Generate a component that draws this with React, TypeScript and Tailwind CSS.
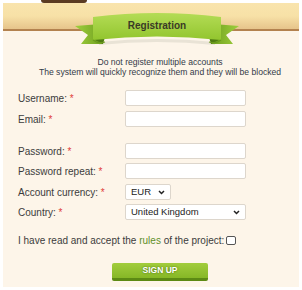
import React from 'react';

const font = { fontFamily: '"Liberation Sans", Arial, sans-serif' };

function Ribbon() {
  return (
    <svg width="172" height="38" viewBox="0 0 172 38" className="absolute left-[68px] top-[6px]">
      <defs>
        <linearGradient id="band" x1="0" y1="0" x2="0" y2="1">
          <stop offset="0" stopColor="#b4dc56" />
          <stop offset="1" stopColor="#92c52e" />
        </linearGradient>
        <linearGradient id="tail" x1="0" y1="0" x2="1" y2="0">
          <stop offset="0" stopColor="#9fcf3d" />
          <stop offset="1" stopColor="#6f9f1f" />
        </linearGradient>
        <linearGradient id="tailr" x1="1" y1="0" x2="0" y2="0">
          <stop offset="0" stopColor="#9fcf3d" />
          <stop offset="1" stopColor="#6f9f1f" />
        </linearGradient>
      </defs>
      {/* shadow under band */}
      <path d="M28 33 Q86 27 144 33 L144 36 Q86 30 28 36 Z" fill="#e9e3d6" />
      {/* tails */}
      <path d="M4 17 L30 15 L32 35 L10 35 L17 26 Z" fill="url(#tail)" />
      <path d="M168 17 L142 15 L140 35 L162 35 L155 26 Z" fill="url(#tailr)" />
      {/* folds */}
      <path d="M22 30 L32 35 L34 28 Z" fill="#4f7c12" />
      <path d="M150 30 L140 35 L138 28 Z" fill="#4f7c12" />
      {/* main band */}
      <path d="M22 8 Q86 0 150 8 L150 31 Q86 24 22 31 Z" fill="url(#band)" />
      <path d="M22 31 Q27 35 34 33" stroke="#6a9a1c" strokeWidth="1.2" fill="none" />
      <path d="M150 31 Q145 35 138 33" stroke="#6a9a1c" strokeWidth="1.2" fill="none" />
      <text x="86" y="20" textAnchor="middle" fontSize="10" fontWeight="bold" fill="#3a3a26" style={font}>
        Registration
      </text>
    </svg>
  );
}

function Label({ text }: { text: string }) {
  return (
    <div className="w-[107px] shrink-0 text-[10px] text-[#3c3c3c]">
      {text} <span className="text-[#e0403a]">*</span>
    </div>
  );
}

function Field({ text, className = 'w-[121px]' }: { text: string; className?: string }) {
  return (
    <div className="flex items-center h-4">
      <Label text={text} />
      <input className={`h-4 ${className} bg-white border border-[#ddd6cc] rounded-[2px] outline-none`} />
    </div>
  );
}

function Select({ value, width }: { value: string; width: string }) {
  return (
    <div className={`relative h-4 ${width} bg-white border border-[#ddd6cc] rounded-[2px] flex items-center pl-[5px] text-[9.5px] text-[#222]`}>
      {value}
      <svg width="7" height="5" viewBox="0 0 7 5" className="absolute right-[5px] top-[5px]">
        <path d="M1 1 L3.5 3.5 L6 1" stroke="#222" strokeWidth="1.5" fill="none" />
      </svg>
    </div>
  );
}

export default function App() {
  return (
    <div className="w-[302px] h-[290px] bg-white p-[3px]" style={font}>
      <div className="relative h-[284px] bg-[#fdf5e9] flex flex-col">
        <div className="absolute left-[38px] top-[-3px] w-[46px] h-[3px] rounded-b-full bg-[#5b3b22]" />
        <div className="h-[28px] bg-gradient-to-b from-[#f9e4ad] via-[#f7e1a7] to-[#e6c48b] border-b-2 border-[#b3824f] shrink-0" />
        <Ribbon />

        <div className="mt-[26px] pl-[18px] text-center text-[8.6px] leading-[10px] text-[#333a48]">
          <p>Do not register multiple accounts</p>
          <p>The system will quickly recognize them and they will be blocked</p>
        </div>

        <div className="mt-[13px] pl-[15px] flex flex-col">
          <Field text="Username:" />
          <div className="mt-[5px]">
            <Field text="Email:" />
          </div>
          <div className="mt-4 flex flex-col gap-1">
            <Field text="Password:" />
            <Field text="Password repeat:" />
            <div className="flex items-center h-4 mt-[1px]">
              <Label text="Account currency:" />
              <Select value="EUR" width="w-[46px]" />
            </div>
            <div className="flex items-center h-4">
              <Label text="Country:" />
              <Select value="United Kingdom" width="w-[121px]" />
            </div>
          </div>

          <div className="mt-[13px] flex items-center text-[10px] text-[#3c3c3c]">
            <span>
              I have read and accept the <span className="text-[#5f8f2a]">rules</span> of the project:
            </span>
            <span className="ml-[2px] w-[10px] h-[9px] bg-white border border-[#555] rounded-[2px]" />
          </div>
        </div>

        <div className="mt-[15px] pl-[18px] flex justify-center">
          <button className="w-[96px] h-[18px] bg-gradient-to-b from-[#a2cd3c] to-[#86b726] border-b-[3px] border-[#5c8a14] rounded-[2px] text-white text-[8.5px] font-bold uppercase [text-shadow:0_0_2px_#3f6308]">
            Sign up
          </button>
        </div>
      </div>
    </div>
  );
}
